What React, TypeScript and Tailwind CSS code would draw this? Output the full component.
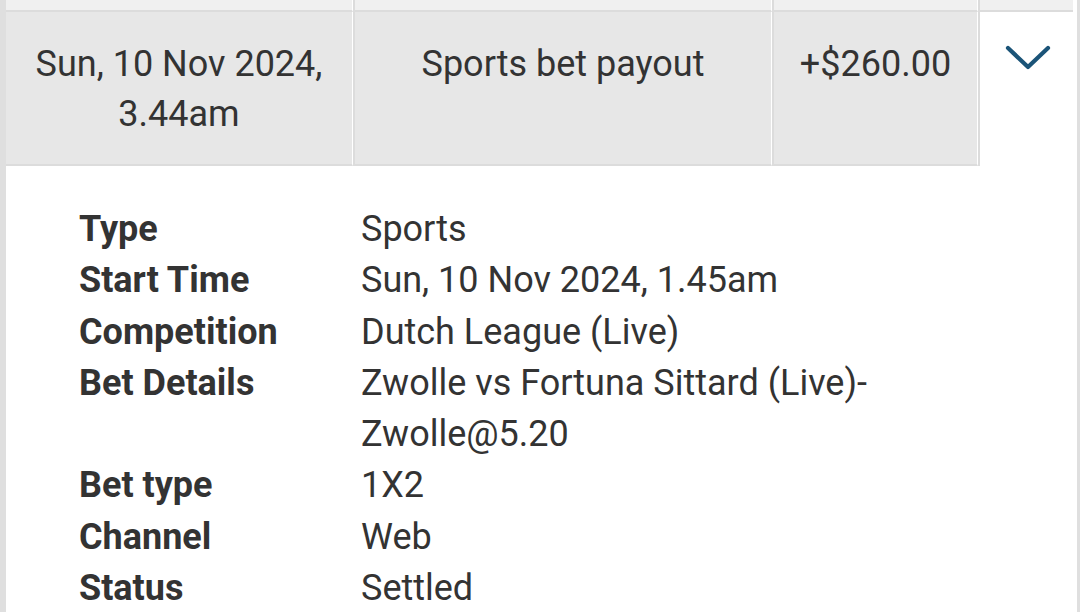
import React from "react";

const rows: [string, string[]][] = [
  ["Type", ["Sports"]],
  ["Start Time", ["Sun, 10 Nov 2024, 1.45am"]],
  ["Competition", ["Dutch League (Live)"]],
  ["Bet Details", ["Zwolle vs Fortuna Sittard (Live)-", "Zwolle@5.20"]],
  ["Bet type", ["1X2"]],
  ["Channel", ["Web"]],
  ["Status", ["Settled"]],
];

export default function App() {
  return (
    <div
      className="w-[1080px] h-[612px] overflow-hidden bg-white flex text-[#333333]"
      style={{ fontFamily: "Roboto, 'Noto Sans', sans-serif" }}
    >
      <div className="w-[6px] shrink-0 bg-[#dfdfdf]" />
      <div className="w-[1067px] shrink-0 flex flex-col">
        {/* previous row strip */}
        <div className="flex h-[12px] shrink-0">
          <div className="w-[347px] bg-[#f0f0f0] border-b-2 border-[#dcdcdc] border-r border-r-white" />
          <div className="w-[419px] bg-[#f0f0f0] border-b-2 border-[#dcdcdc] border-l-2 border-l-[#dcdcdc] border-r border-r-white" />
          <div className="w-[206px] bg-[#f0f0f0] border-b-2 border-[#dcdcdc] border-l-2 border-l-[#dcdcdc] border-r border-r-white" />
          <div className="w-[95px] bg-[#f0f0f0] border-b-2 border-[#dcdcdc] border-l-2 border-l-[#dcdcdc]" />
        </div>
        {/* main row */}
        <div className="flex h-[154px] shrink-0 text-[36px] leading-[50px]">
          <div className="w-[347px] bg-[#e7e7e7] border-b-2 border-[#dcdcdc] border-r border-r-white flex justify-center pt-[27px] text-center">
            <div>
              Sun, 10 Nov 2024,
              <br />
              3.44am
            </div>
          </div>
          <div className="w-[419px] bg-[#e7e7e7] border-b-2 border-[#dcdcdc] border-l-2 border-l-[#dcdcdc] border-r border-r-white flex justify-center pt-[27px] text-center">
            Sports bet payout
          </div>
          <div className="w-[206px] bg-[#e7e7e7] border-b-2 border-[#dcdcdc] border-l-2 border-l-[#dcdcdc] border-r border-r-white flex justify-center pt-[27px] text-center">
            +$260.00
          </div>
          <div className="w-[95px] bg-white border-l-2 border-l-[#dcdcdc] flex justify-center pt-[32px] pl-[2px]">
            <svg width="48" height="30" viewBox="0 0 48 30" fill="none">
              <path
                d="M4 4 L24 23 L44 4"
                stroke="#1b5478"
                strokeWidth="4.2"
                strokeLinecap="round"
                strokeLinejoin="round"
              />
            </svg>
          </div>
        </div>
        {/* details */}
        <div className="flex-1 bg-white pt-[38px] pl-[73px] text-[36px] leading-[51.3px]">
          {rows.map(([label, vals]) => (
            <div key={label} className="flex">
              <div className="w-[282px] shrink-0 font-bold">{label}</div>
              <div>
                {vals.map((v) => (
                  <div key={v}>{v}</div>
                ))}
              </div>
            </div>
          ))}
        </div>
      </div>
      <div className="w-[4px] shrink-0 bg-white" />
      <div className="w-[3px] shrink-0 bg-[#dfdfdf]" />
    </div>
  );
}
